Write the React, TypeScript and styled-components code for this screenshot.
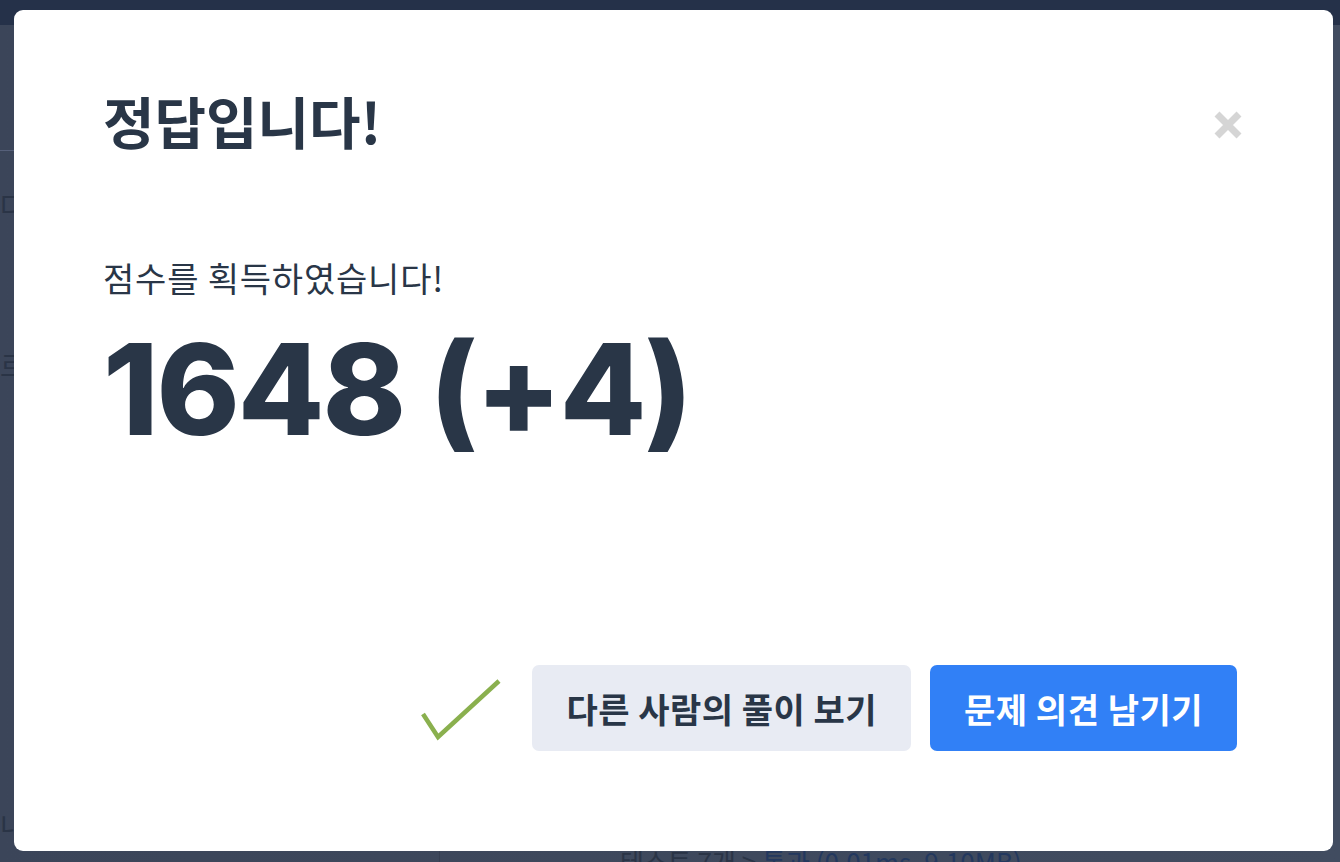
import styled, { createGlobalStyle } from 'styled-components';

const GlobalStyle = createGlobalStyle`
  * {
    box-sizing: border-box;
  }

  body {
    margin: 0;
    font-family: Inter, 'Noto Sans CJK KR', sans-serif;
    background: #3f495d;
  }
`;

const Page = styled.div`
  height: 862px;
  overflow: hidden;
  background: linear-gradient(90deg, #3b4559 0%, #414c60 100%);
  color: #2a3446;
`;

const TopBar = styled.div`
  height: 25px;
  background: #253149;
`;

const PageBody = styled.div`
  display: grid;
  grid-template-columns: 440px 1fr;
  height: 837px;
`;

const Side = styled.div`
  display: flex;
  flex-direction: column;
  padding-top: 125px;
  font-family: 'Noto Sans CJK KR', sans-serif;
  font-size: 28px;
  border-right: 1px solid #363f52;
`;

const SideRule = styled.div`
  height: 1px;
  background: #56607a;
  margin-bottom: 34px;
`;

const SideLine = styled.div<{ $gap: number }>`
  margin-bottom: ${({ $gap }) => $gap}px;
  white-space: nowrap;
`;

const Content = styled.div`
  display: flex;
  flex-direction: column;
  justify-content: flex-end;
  padding: 0 0 0 180px;
`;

const ResultLine = styled.div`
  font-family: 'Noto Sans CJK KR', sans-serif;
  font-size: 26px;
  line-height: 30px;
  margin-bottom: -14px;
  white-space: nowrap;

  span {
    color: #23385e;
  }
`;

const Overlay = styled.div`
  position: fixed;
  inset: 0;
  display: flex;
  padding: 10px 7px 11px 14px;
`;

const Modal = styled.div`
  flex: 1;
  display: flex;
  flex-direction: column;
  background: #ffffff;
  border-radius: 9px;
  padding: 74px 96px 100px 89px;
  color: #293647;
`;

const Header = styled.div`
  display: flex;
  justify-content: space-between;
  align-items: center;
  margin-right: -5px;
`;

const Title = styled.h1`
  margin: 0;
  font-family: 'Noto Sans CJK KR', sans-serif;
  font-size: 56px;
  line-height: 72px;
  font-weight: 700;
`;

const CloseButton = styled.button`
  display: flex;
  margin-top: 10px;
  padding: 0;
  border: none;
  background: none;
  cursor: pointer;
`;

const Message = styled.p`
  margin: 102px 0 0;
  font-family: 'Noto Sans CJK KR', sans-serif;
  font-size: 34px;
  line-height: 40px;
  font-weight: 400;
  letter-spacing: 0.8px;
`;

const Score = styled.div`
  margin-top: 21px;
  font-family: Inter, sans-serif;
  font-size: 126px;
  line-height: 140px;
  font-weight: 800;
  letter-spacing: -2.1px;
`;

const Footer = styled.div`
  margin-top: auto;
  display: flex;
  justify-content: flex-end;
  align-items: center;
  gap: 19px;
`;

const Check = styled.svg`
  margin-right: 12px;
  margin-top: 4px;
`;

const Button = styled.button<{ $primary?: boolean }>`
  height: 86px;
  padding: 0 34px;
  border: none;
  border-radius: 7px;
  font-family: 'Noto Sans CJK KR', sans-serif;
  font-size: 34px;
  font-weight: 700;
  letter-spacing: 0.5px;
  cursor: pointer;
  background: ${({ $primary }) => ($primary ? '#3180f6' : '#e8ebf3')};
  color: ${({ $primary }) => ($primary ? '#ffffff' : '#293647')};
`;

function App() {
  return (
    <>
      <GlobalStyle />
      <Page>
        <TopBar />
        <PageBody>
          <Side>
            <SideRule />
            <SideLine $gap={120}>다음 문제</SideLine>
            <SideLine $gap={420}>르</SideLine>
            <SideLine $gap={0}>내 풀이</SideLine>
          </Side>
          <Content>
            <ResultLine>
              테스트 7개 &gt; <span>통과 (0.01ms, 9.10MB)</span>
            </ResultLine>
          </Content>
        </PageBody>
      </Page>
      <Overlay>
        <Modal>
          <Header>
            <Title>정답입니다!</Title>
            <CloseButton aria-label="닫기">
              <svg width="28" height="28" viewBox="0 0 28 28">
                <path d="M3 3 L25 25 M25 3 L3 25" stroke="#d5d5d5" strokeWidth="7" />
              </svg>
            </CloseButton>
          </Header>
          <Message>점수를 획득하였습니다!</Message>
          <Score>1648 (+4)</Score>
          <Footer>
            <Check width="80" height="62" viewBox="0 0 80 62">
              <polyline points="2,35 17,58 78,2" fill="none" stroke="#8ab04e" strokeWidth="4.5" />
            </Check>
            <Button>다른 사람의 풀이 보기</Button>
            <Button $primary>문제 의견 남기기</Button>
          </Footer>
        </Modal>
      </Overlay>
    </>
  );
}

export default App;
